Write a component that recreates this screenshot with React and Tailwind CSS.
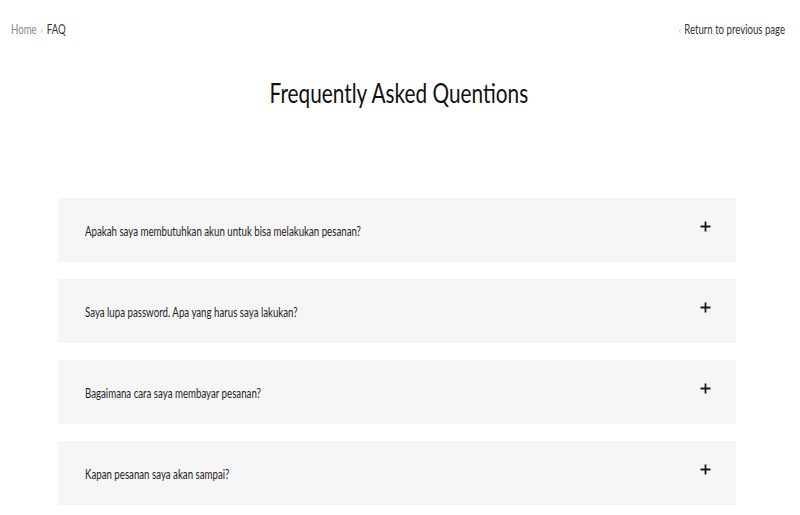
import React, { useState } from 'react';

const QUESTIONS = [
  { id: 1, q: 'Apakah saya membutuhkan akun untuk bisa melakukan pesanan?', a: 'Tidak, Anda dapat melakukan pesanan tanpa membuat akun.' },
  { id: 2, q: 'Saya lupa password. Apa yang harus saya lakukan?', a: 'Klik "Lupa password" pada halaman masuk untuk mengatur ulang password Anda.' },
  { id: 3, q: 'Bagaimana cara saya membayar pesanan?', a: 'Pembayaran dapat dilakukan melalui transfer bank atau kartu kredit.' },
  { id: 4, q: 'Kapan pesanan saya akan sampai?', a: 'Pesanan biasanya sampai dalam 2-5 hari kerja.' },
];

function PlusIcon() {
  return (
    <svg width="11" height="11" viewBox="0 0 11 11" className="text-[#1a1a1a]">
      <path d="M5.5 0.5v10M0.5 5.5h10" stroke="currentColor" strokeWidth="1.8" />
    </svg>
  );
}

function FaqItem({ item }) {
  const [open, setOpen] = useState(false);
  return (
    <div className="bg-[#f6f6f6]">
      <button
        className="w-full h-[64px] flex items-center justify-between pl-[27px] pr-[25px] text-left"
        onClick={() => setOpen(!open)}
      >
        <span className="inline-block text-[12.5px] text-[#1e1e1e] scale-x-[0.775] origin-left whitespace-nowrap pt-[5px]">{item.q}</span>
        <span className="-mt-[6px]"><PlusIcon /></span>
      </button>
      {open && <div className="px-[27px] pb-4 text-[12px] text-gray-600">{item.a}</div>}
    </div>
  );
}

export default function App() {
  return (
    <div className="w-full min-h-screen bg-white font-['Lato',sans-serif]">
      {/* breadcrumb */}
      <div className="flex items-center justify-between pl-[11px] pr-[15px] pt-[21px] text-[12.5px]">
        <div className="flex items-center gap-[2px] scale-x-[0.77] origin-left">
          <span className="text-[#8a8a8a]">Home</span>
          <span className="text-[#b0b0b0] text-[11px] px-[3px]">›</span>
          <span className="text-[#333]">FAQ</span>
        </div>
        <div className="flex items-center gap-[4px] scale-x-[0.77] origin-right">
          <span className="text-[#b0b0b0] text-[11px]">‹</span>
          <span className="text-[#333]">Return to previous page</span>
        </div>
      </div>

      {/* title */}
      <div className="flex justify-center mt-[36px] pr-[3px]">
        <h1 className="inline-block text-[27px] leading-[34px] text-[#111] scale-x-[0.77] whitespace-nowrap">Frequently Asked Quentions</h1>
      </div>

      {/* list */}
      <div className="mx-[58px] w-[678px] mt-[88px] flex flex-col gap-[17px]">
        {QUESTIONS.map((item) => (
          <FaqItem key={item.id} item={item} />
        ))}
      </div>
    </div>
  );
}
